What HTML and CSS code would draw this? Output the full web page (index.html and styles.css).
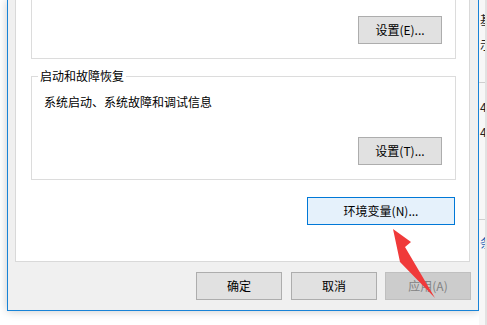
FILE: index.html
```html
<!DOCTYPE html>
<html lang="zh-CN">
<head>
<meta charset="utf-8">
<link rel="stylesheet" href="styles.css">
</head>
<body>
<div class="desktop">
  <div class="gutter"></div>
  <div class="dialog">
    <div class="page">
      <div class="group g1">
        <div class="btn-row"><button class="btn">设置(E)...</button></div>
      </div>
      <fieldset class="group g2">
        <legend class="legend">启动和故障恢复</legend>
        <div class="desc">系统启动、系统故障和调试信息</div>
        <div class="btn-row"><button class="btn">设置(T)...</button></div>
      </fieldset>
      <div class="env-row"><button class="btn env">环境变量(N)...</button></div>
    </div>
    <div class="footer">
      <button class="btn foot">确定</button>
      <button class="btn foot">取消</button>
      <button class="btn foot disabled">应用(A)</button>
    </div>
  </div>
  <div class="side">
    <div class="side-row r1">基</div>
    <div class="side-row r2">示</div>
    <div class="side-line l1"></div>
    <div class="side-row r3">47</div>
    <div class="side-row r4">47</div>
    <div class="side-line l2"></div>
    <div class="side-row r5 link">条</div>
  </div>
</div>
<svg class="arrow" width="487" height="325" viewBox="0 0 487 325">
  <polygon points="393,229 411,242 405,247 435,298 400,262" fill="#f03a3a"/>
</svg>
</body>
</html>
```
FILE: styles.css
```css
html, body {
  margin: 0;
  padding: 0;
  background: #ffffff;
  width: 487px;
  height: 325px;
  overflow: hidden;
  font-family: "Noto Sans CJK SC", "Microsoft YaHei", sans-serif;
  font-size: 12px;
  line-height: 16px;
  color: #000;
}
.desktop {
  display: flex;
  align-items: flex-start;
  height: 325px;
}
.gutter {
  width: 7px;
  flex: none;
}
.dialog {
  flex: none;
  width: 472px;
  box-sizing: border-box;
  background: #f0f0f0;
  border: 1px solid #1883d7;
  border-top: none;
  padding: 0 8px 10px 7px;
  box-shadow: 0 0 9px rgba(0, 0, 0, 0.22);
}
.page {
  background: #fff;
  border: 1px solid #d9d9d9;
  border-top: none;
  padding: 0 13px 36px 15px;
}
.group {
  border: 1px solid #dcdcdc;
  margin: 0;
  min-width: 0;
}
.g1 {
  border-top: none;
  padding: 16px 13px 14px 0;
}
.g2 {
  margin-top: 9px;
  padding: 10px 13px 14px 12px;
}
.legend {
  padding: 0 2px;
  margin-left: -6px;
  line-height: 16px;
}
.btn-row {
  display: flex;
  justify-content: flex-end;
}
.g2 .btn-row {
  margin-top: 27px;
}
.desc {
  line-height: 16px;
}
.btn {
  font-family: inherit;
  font-size: 12px;
  line-height: 16px;
  color: #000;
  width: 84px;
  height: 28px;
  box-sizing: border-box;
  background: #e1e1e1;
  border: 1px solid #adadad;
  border-radius: 0;
  padding: 0;
  margin: 0;
}
.env-row {
  display: flex;
  justify-content: flex-end;
  margin-top: 17px;
  margin-right: 1px;
}
.btn.env {
  width: 148px;
  background: #e5f1fb;
  border-color: #0078d7;
}
.footer {
  display: flex;
  justify-content: flex-end;
  margin-top: 10px;
  margin-right: -1px;
}
.btn.foot {
  width: 86px;
  margin-left: 9px;
}
.btn.foot.disabled {
  margin-left: 8px;
  background: #cccccc;
  border-color: #bfbfbf;
  color: #838383;
}
.side {
  flex: none;
  width: 8px;
  height: 325px;
  box-sizing: border-box;
  background: #f7f7f7;
  border-right: 2px solid #e2e2e2;
  overflow: hidden;
  display: flex;
  flex-direction: column;
}
.side-row {
  height: 16px;
  line-height: 16px;
  white-space: nowrap;
  padding-left: 1px;
  color: #222;
}
.r1 { margin-top: 12px; }
.r2 { margin-top: 9px; }
.r3 { margin-top: 16px; }
.r4 { margin-top: 9px; }
.r5 { margin-top: 15px; }
.link { color: #1e5fb4; }
.side-line {
  height: 1px;
  background: #cfcfcf;
  flex: none;
}
.l1 { margin-top: 29px; }
.l2 { margin-top: 79px; }
.arrow {
  position: absolute;
  left: 0;
  top: 0;
  pointer-events: none;
}
```
